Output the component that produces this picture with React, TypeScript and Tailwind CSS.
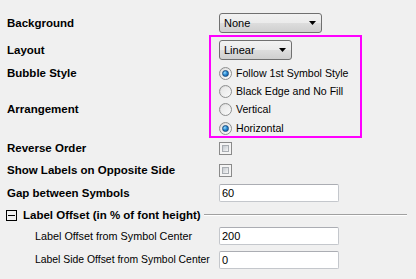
import React from 'react'

const Dropdown = ({ text, className }: { text: string; className: string }) => (
  <div
    className={`flex h-[20px] items-center justify-between rounded-[3px] border border-[#707070] bg-[linear-gradient(#f2f2f2_0%,#ebebeb_50%,#dddddd_51%,#cfcfcf_100%)] pl-[4px] pr-[5px] text-[11px] leading-none ${className}`}
  >
    <span>{text}</span>
    <svg width="7" height="4" viewBox="0 0 7 4">
      <path d="M0 0h7L3.5 4z" fill="#000" />
    </svg>
  </div>
)

const Radio = ({ checked, label }: { checked?: boolean; label: string }) => (
  <div className="flex items-center gap-[4px]">
    <div className="flex h-[13px] w-[13px] items-center justify-center rounded-full border border-[#8e8f8f] bg-[linear-gradient(135deg,#d4d4d4,#ffffff)]">
      <div className="flex h-[9px] w-[9px] items-center justify-center rounded-full bg-[linear-gradient(135deg,#e6e6e6,#f8f8f8)]">
        {checked && (
          <div className="h-[7px] w-[7px] rounded-full border border-[#1c4d80] bg-[radial-gradient(circle_at_35%_35%,#9be0ff_0%,#2a8ad4_45%,#0b4f96_100%)]" />
        )}
      </div>
    </div>
    <span className="text-[10.6px] leading-none">{label}</span>
  </div>
)

const Checkbox = () => (
  <div className="h-[13px] w-[13px] border border-[#8a8a8a] bg-[#f4f4f4] p-[2px]">
    <div className="h-full w-full border border-[#a9adb2] bg-[linear-gradient(135deg,#c5c9cf,#f6f6f6)]" />
  </div>
)

const TextBox = ({ value }: { value: string }) => (
  <div className="flex h-[18px] w-[120px] items-center rounded-[2px] border border-[#c4c7cc] border-t-[#abadb3] bg-white pl-[2px] text-[11px] leading-none">
    {value}
  </div>
)

const label = 'w-[219px] shrink-0 pl-[7px] pt-[1px] text-[11.5px] font-bold leading-none'
const sub = 'w-[219px] shrink-0 pl-[35px] pt-[1px] leading-none whitespace-nowrap'

export default function App() {
  return (
    <div className="relative h-[279px] w-[416px] overflow-hidden bg-[#f0f0f0] font-['Liberation_Sans',Arial,sans-serif] text-black">
      <div className="flex flex-col pt-[12px]">
        <div className="flex h-[22px] items-center">
          <div className={label}>Background</div>
          <Dropdown text="None" className="w-[103px]" />
        </div>
        <div className="mt-[5px] flex h-[22px] items-center">
          <div className={label}>Layout</div>
          <Dropdown text="Linear" className="w-[73px]" />
        </div>
        <div className="mt-[3px] flex h-[18px] items-center">
          <div className={label}>Bubble Style</div>
          <Radio checked label="Follow 1st Symbol Style" />
        </div>
        <div className="flex h-[18px] items-center">
          <div className={label}></div>
          <Radio label="Black Edge and No Fill" />
        </div>
        <div className="flex h-[19px] items-center">
          <div className={label}>Arrangement</div>
          <Radio label="Vertical" />
        </div>
        <div className="flex h-[18px] items-center">
          <div className={label}></div>
          <Radio checked label="Horizontal" />
        </div>
        <div className="mt-[1px] flex h-[20px] items-center">
          <div className={label}>Reverse Order</div>
          <Checkbox />
        </div>
        <div className="flex h-[24px] items-center">
          <div className={label}>Show Labels on Opposite Side</div>
          <Checkbox />
        </div>
        <div className="flex h-[22px] items-center">
          <div className={label}>Gap between Symbols</div>
          <TextBox value="60" />
        </div>
        <div className="flex h-[22px] items-center pl-[6px] pr-[9px]">
          <div className="flex h-[11px] w-[11px] items-center justify-center border border-black">
            <div className="h-[1px] w-[7px] bg-black" />
          </div>
          <span className="ml-[6px] whitespace-nowrap pt-[1px] text-[11.5px] font-bold leading-none">
            Label Offset (in % of font height)
          </span>
          <div className="ml-[3px] flex-1 border-t border-b border-t-[#a0a0a0] border-b-white" />
        </div>
        <div className="flex h-[20px] items-center">
          <div className={`${sub} text-[10.8px]`}>Label Offset from Symbol Center</div>
          <TextBox value="200" />
        </div>
        <div className="mt-[4px] flex h-[20px] items-center">
          <div className={`${sub} text-[10.4px]`}>Label Side Offset from Symbol Center</div>
          <TextBox value="0" />
        </div>
      </div>
      <div className="absolute left-[209px] top-[35px] h-[103px] w-[153px] border-2 border-[#ff00ff]" />
    </div>
  )
}
